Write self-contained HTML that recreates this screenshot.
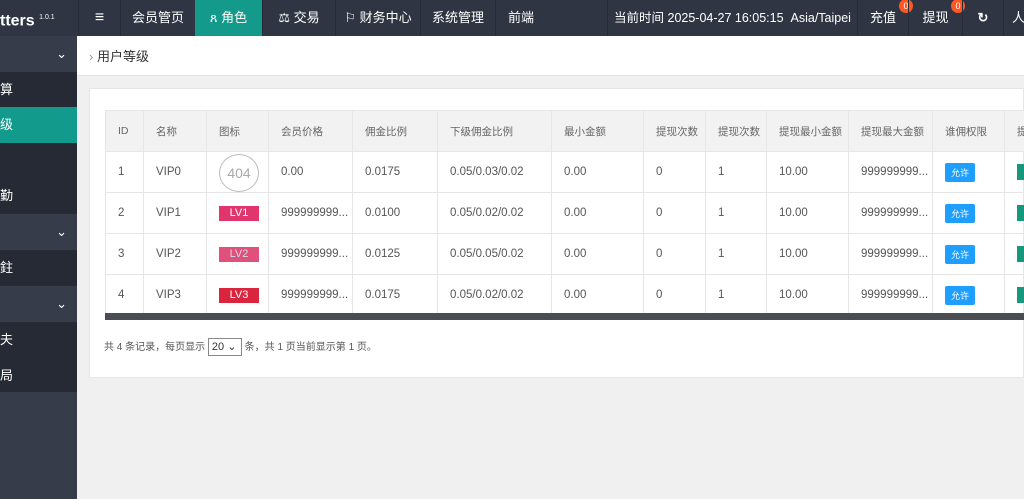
<!DOCTYPE html>
<html><head><meta charset="utf-8"><style>
*{margin:0;padding:0;box-sizing:border-box}
body{width:1024px;height:499px;overflow:hidden;background:#f0f0f0;font-family:"Liberation Sans","Noto Sans CJK SC",sans-serif;font-size:12px;color:#333;position:relative}
.top{position:absolute;left:0;top:0;width:1024px;height:36px;background:#2f3542;color:#fff}
.top div{position:absolute;top:0;height:36px;line-height:36px;font-size:13px;text-align:center;border-left:1px solid #262b35}
.side{position:absolute;left:0;top:36px;width:77px;height:463px;background:#363c4a}
.side div{position:absolute;left:0;width:77px;color:#fff;font-size:13px}
.bc{position:absolute;left:77px;top:36px;width:947px;height:40px;background:#fff;font-size:13px;line-height:42px;padding-left:12px;color:#333;border-bottom:1px solid #e2e2e2}
.card{position:absolute;left:89px;top:88px;width:935px;height:290px;background:#fff;border:1px solid #e6e6e6}
.tw{position:absolute;left:105px;top:110px;width:1000px}
table{border-collapse:collapse;table-layout:fixed;width:929px}
td{border:1px solid #e6e6e6;height:41px;padding-left:12px;font-size:11.5px;color:#555;white-space:nowrap;overflow:hidden}
tr.h td{background:#f2f2f2;height:41px;color:#666;font-size:10.5px}
.b{display:inline-block;background:#1e9fff;color:#fff;font-size:9px;padding:3px 6px;border-radius:2px}
.g{display:inline-block;background:#16987d;width:10px;height:16px;vertical-align:middle}
.lv{display:inline-block;width:40px;height:15px;color:#fff;font-size:11px;text-align:center;line-height:15px;vertical-align:middle}
.badge{position:absolute;top:-1px;width:14px;height:14px;border-radius:50%;background:#ff5722;color:#fff;font-size:9px;line-height:14px;text-align:center}
</style></head><body>
<div class="top">
<div style="left:0;width:78px;border:0;text-align:left;font-size:16px;font-weight:bold">tters <sup style="font-size:7px;font-weight:normal">1.0.1</sup></div>
<div style="left:78px;width:42px;font-size:16px">≡</div>
<div style="left:120px;width:75px">会员管页</div>
<div style="left:195px;width:67px;background:#149a8a;border:0">ጸ 角色</div>
<div style="left:262px;width:73px">⚖ 交易</div>
<div style="left:335px;width:85px">⚐ 财务中心</div>
<div style="left:420px;width:75px">系统管理</div>
<div style="left:495px;width:112px;text-align:left;padding-left:12px">前端</div>
<div style="left:607px;width:250px;font-size:12.5px">当前时间 2025-04-27 16:05:15 &nbsp;Asia/Taipei</div>
<div style="left:857px;width:51px">充值<span class="badge" style="left:41px">0</span></div>
<div style="left:908px;width:54px">提现<span class="badge" style="left:42px">0</span></div>
<div style="left:962px;width:41px;font-weight:bold">↻</div>
<div style="left:1003px;width:30px">人</div>
</div>
<div class="side">
<div style="top:0;height:36px;background:#363c4a;text-align:right;padding-right:10px;line-height:36px">⌄</div>
<div style="top:36px;height:35px;background:#262a35;line-height:35px">算</div>
<div style="top:71px;height:36px;background:#129a8c;line-height:36px">级</div>
<div style="top:107px;height:71px;background:#262a35;line-height:105px">勤</div>
<div style="top:178px;height:36px;text-align:right;padding-right:10px;line-height:36px">⌄</div>
<div style="top:214px;height:36px;background:#262a35;line-height:36px">鉒</div>
<div style="top:250px;height:36px;text-align:right;padding-right:10px;line-height:36px">⌄</div>
<div style="top:286px;height:70px;background:#262a35;line-height:36px">夫<br>局</div>
</div>
<div class="bc"><span style="color:#999">›</span> 用户等级</div>
<div class="card"></div>
<div class="tw">
<table>
<colgroup><col width="38"><col width="63"><col width="62"><col width="84"><col width="85"><col width="114"><col width="92"><col width="62"><col width="61"><col width="82"><col width="84"><col width="72"><col width="30"></colgroup>
<tr class="h"><td>ID</td><td>名称</td><td>图标</td><td>会员价格</td><td>佣金比例</td><td>下级佣金比例</td><td>最小金额</td><td>提现次数</td><td>提现次数</td><td>提现最小金额</td><td>提现最大金额</td><td>谁佣权限</td><td>提</td></tr>
<tr><td>1</td><td>VIP0</td><td><span style="display:inline-block;width:40px;height:38px;border:1px solid #bbb;border-radius:50%;color:#aaa;font-size:14px;text-align:center;line-height:36px;margin-top:1px">404</span></td><td>0.00</td><td>0.0175</td><td>0.05/0.03/0.02</td><td>0.00</td><td>0</td><td>1</td><td>10.00</td><td>999999999...</td><td><span class="b">允许</span></td><td><span class="g"></span></td></tr>
<tr><td>2</td><td>VIP1</td><td><span class="lv" style="background:#e0366b">LV1</span></td><td>999999999...</td><td>0.0100</td><td>0.05/0.02/0.02</td><td>0.00</td><td>0</td><td>1</td><td>10.00</td><td>999999999...</td><td><span class="b">允许</span></td><td><span class="g"></span></td></tr>
<tr><td>3</td><td>VIP2</td><td><span class="lv" style="background:#e0507a;color:#cde">LV2</span></td><td>999999999...</td><td>0.0125</td><td>0.05/0.05/0.02</td><td>0.00</td><td>0</td><td>1</td><td>10.00</td><td>999999999...</td><td><span class="b">允许</span></td><td><span class="g"></span></td></tr>
<tr><td>4</td><td>VIP3</td><td><span class="lv" style="background:#d9253d">LV3</span></td><td>999999999...</td><td>0.0175</td><td>0.05/0.02/0.02</td><td>0.00</td><td>0</td><td>1</td><td>10.00</td><td>999999999...</td><td><span class="b">允许</span></td><td><span class="g"></span></td></tr>
</table>
</div>
<div style="position:absolute;left:105px;top:313px;width:919px;height:7px;background:#4a4d52"></div>
<div style="position:absolute;left:104px;top:338px;font-size:10px;color:#555;line-height:16px">共 4 条记录，每页显示 <span style="display:inline-block;border:1px solid #888;padding:0 3px;width:34px;font-size:11px;color:#333">20 ⌄</span> 条，共 1 页当前显示第 1 页。</div>
</body></html>
